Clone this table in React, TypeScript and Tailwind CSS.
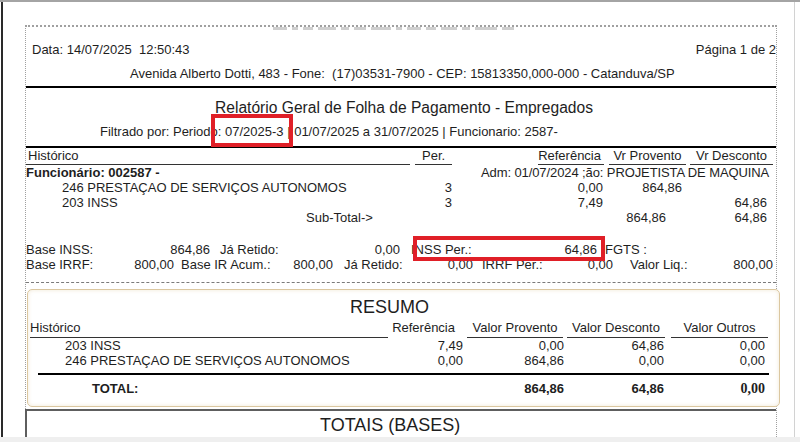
export default function App() {
  const cutMarks = [14, 6, 10, 18, 8, 12, 20, 6, 14, 10, 16, 8, 22, 12];

  return (
    <div className="w-[800px] h-[442px] bg-white flex flex-col overflow-hidden font-['Liberation_Sans',Arial,sans-serif] text-[13px] text-[#1e1e1e]">
      <div className="h-[2px] shrink-0 bg-[#a4a4a4]" />
      <div className="flex-1 flex min-h-0">
        <div className="ml-[1px] w-[794px] border-l-2 border-r border-l-[#2a2a2a] border-r-[#d2d2d2] pl-[22px] pt-[23px] overflow-hidden">
          <div className="w-[752px] h-[600px] border-t-2 border-x border-dotted border-[#a0a0a0]">
            {/* cabeçalho */}
            <div className="h-[61px] border-b-2 border-black">
              <div className="flex h-[3px] gap-[5px] ml-[247px]">
                {cutMarks.map((w, i) => (
                  <div key={i} className="h-[3px] bg-[#cfcfcf]" style={{ width: w }} />
                ))}
              </div>
              <div className="mt-[12px] flex justify-between h-[15px] leading-[15px] pl-[6px] whitespace-pre">
                <span>Data: 14/07/2025  12:50:43</span>
                <span>Página 1 de 2</span>
              </div>
              <div className="mt-[9px] h-[15px] leading-[15px] pl-[104px] whitespace-pre">
                Avenida Alberto Dotti, 483 - Fone:  (17)03531-7900 - CEP: 15813350,000-000 - Catanduva/SP
              </div>
            </div>

            {/* título */}
            <div className="relative h-[60px] border-b-2 border-black">
              <div className="pt-[10px] h-[29px] leading-[20px] text-[15.6px] text-center pl-[6px]">
                Relatório Geral de Folha de Pagamento - Empregados
              </div>
              <div className="mt-[7px] h-[15px] leading-[15px] pl-[74px] whitespace-nowrap">
                Filtrado por: Periodo: 07/2025-3 | 01/07/2025 a 31/07/2025 | Funcionario: 2587-
              </div>
              <div className="absolute left-[185px] top-[26px] w-[82px] h-[33px] border-4 border-[#e01f27]" />
            </div>

            {/* tabela */}
            <div className="flex h-[17px] leading-[15px] whitespace-nowrap">
              <div className="w-[384px] border-b border-[#333] pl-[2px]">Histórico</div>
              <div className="ml-[5px] w-[37px] border-b border-[#333] pl-[7px]">Per.</div>
              <div className="ml-[86px] w-[66px] border-b border-[#333] text-right pr-[3px]">Referência</div>
              <div className="ml-[5px] w-[77px] border-b border-[#333] text-center">Vr Provento</div>
              <div className="ml-[4px] w-[83px] border-b border-[#333] text-center">Vr Desconto</div>
            </div>
            <div className="flex h-[15px] leading-[15px] whitespace-nowrap">
              <div className="w-[455px] font-bold">Funcionário: 002587 -</div>
              <div className="tracking-[-0.1px]">Adm: 01/07/2024 ;ão: PROJETISTA DE MAQUINA</div>
            </div>
            <div className="flex h-[15px] leading-[15px] whitespace-nowrap">
              <div className="w-[389px] pl-[36px]">246 PRESTAÇAO DE SERVIÇOS AUTONOMOS</div>
              <div className="w-[37px] text-right">3</div>
              <div className="w-[151px] text-right">0,00</div>
              <div className="w-[79px] text-right">864,86</div>
              <div className="w-[85px] text-right"></div>
            </div>
            <div className="flex h-[15px] leading-[15px] whitespace-nowrap">
              <div className="w-[389px] pl-[36px]">203 INSS</div>
              <div className="w-[37px] text-right">3</div>
              <div className="w-[151px] text-right">7,49</div>
              <div className="w-[79px] text-right"></div>
              <div className="w-[85px] text-right">64,86</div>
            </div>
            <div className="flex h-[15px] leading-[15px] whitespace-nowrap">
              <div className="w-[280px]" />
              <div className="w-[254px]">Sub-Total-&gt;</div>
              <div className="w-[106px] text-right">864,86</div>
              <div className="w-[101px] text-right">64,86</div>
            </div>

            {/* bases */}
            <div className="relative mt-[17px]">
              <div className="flex h-[15px] leading-[15px] whitespace-nowrap">
                <div className="w-[184px] flex justify-between"><span>Base INSS:</span><span>864,86</span></div>
                <div className="w-[190px] pl-[10px] flex justify-between"><span>Já Retido:</span><span>0,00</span></div>
                <div className="w-[197px] pl-[11px] flex justify-between"><span>INSS Per.:</span><span>64,86</span></div>
                <div className="pl-[8px]">FGTS :</div>
              </div>
              <div className="flex h-[15px] leading-[15px] whitespace-nowrap">
                <div className="w-[148px] flex justify-between"><span>Base IRRF:</span><span>800,00</span></div>
                <div className="w-[159px] pl-[7px] flex justify-between"><span>Base IR Acum.:</span><span>800,00</span></div>
                <div className="w-[140px] pl-[11px] flex justify-between"><span>Já Retido:</span><span>0,00</span></div>
                <div className="w-[140px] pl-[9px] flex justify-between"><span>IRRF Per.:</span><span>0,00</span></div>
                <div className="w-[160px] pl-[17px] flex justify-between"><span>Valor Liq.:</span><span>800,00</span></div>
              </div>
              <div className="absolute left-[387px] top-[-6px] w-[192px] h-[25px] border-4 border-[#e01f27]" />
            </div>

            <div className="mt-[10px] border-t border-dashed border-[#7a7a7a]" />

            {/* resumo */}
            <div className="mt-[6px] ml-[1px] w-[753px] h-[118px] rounded-[5px] border border-[#dbc7a0] bg-white shadow-[inset_0_0_4px_rgba(225,205,165,0.45)]">
              <div className="pt-[6px] h-[28px] leading-[22px] text-[18px] pl-[322px]">RESUMO</div>
              <div className="mt-[2px] flex h-[18px] leading-[15px] whitespace-nowrap">
                <div className="ml-[2px] w-[358px] border-b border-[#333]">Histórico</div>
                <div className="w-[79px] text-right pr-[12px]">Referência</div>
                <div className="w-[96px] border-b border-[#333] text-center">Valor Provento</div>
                <div className="ml-[4px] w-[98px] border-b border-[#333] text-center">Valor Desconto</div>
                <div className="ml-[6px] w-[97px] border-b border-[#333] text-center">Valor Outros</div>
              </div>
              <div className="flex h-[15px] leading-[15px] whitespace-nowrap">
                <div className="w-[360px] pl-[37px]">203 INSS</div>
                <div className="w-[75px] text-right">7,49</div>
                <div className="w-[101px] text-right">0,00</div>
                <div className="w-[100px] text-right">64,86</div>
                <div className="w-[101px] text-right">0,00</div>
              </div>
              <div className="flex h-[15px] leading-[15px] whitespace-nowrap">
                <div className="w-[360px] pl-[37px]">246 PRESTAÇAO DE SERVIÇOS AUTONOMOS</div>
                <div className="w-[75px] text-right">0,00</div>
                <div className="w-[101px] text-right">864,86</div>
                <div className="w-[100px] text-right">0,00</div>
                <div className="w-[101px] text-right">0,00</div>
              </div>
              <div className="mt-[5px] ml-[10px] w-[731px] h-[2px] bg-black" />
              <div className="mt-[6px] flex h-[15px] leading-[15px] whitespace-nowrap font-bold">
                <div className="w-[360px] pl-[64px]">TOTAL:</div>
                <div className="w-[75px]" />
                <div className="w-[101px] text-right">864,86</div>
                <div className="w-[100px] text-right">64,86</div>
                <div className="w-[101px] text-right font-['Liberation_Serif',serif] text-[14px]">0,00</div>
              </div>
            </div>

            {/* totais */}
            <div className="mt-[2px] -ml-px border-t-2 border-l-2 border-[#5e5e5e] h-[60px]">
              <div className="pt-[3px] leading-[22px] text-[18px] pl-[293px]">TOTAIS (BASES)</div>
            </div>
          </div>
        </div>
      </div>
      <div className="h-[5px] shrink-0 bg-[#efefef]" />
    </div>
  );
}
